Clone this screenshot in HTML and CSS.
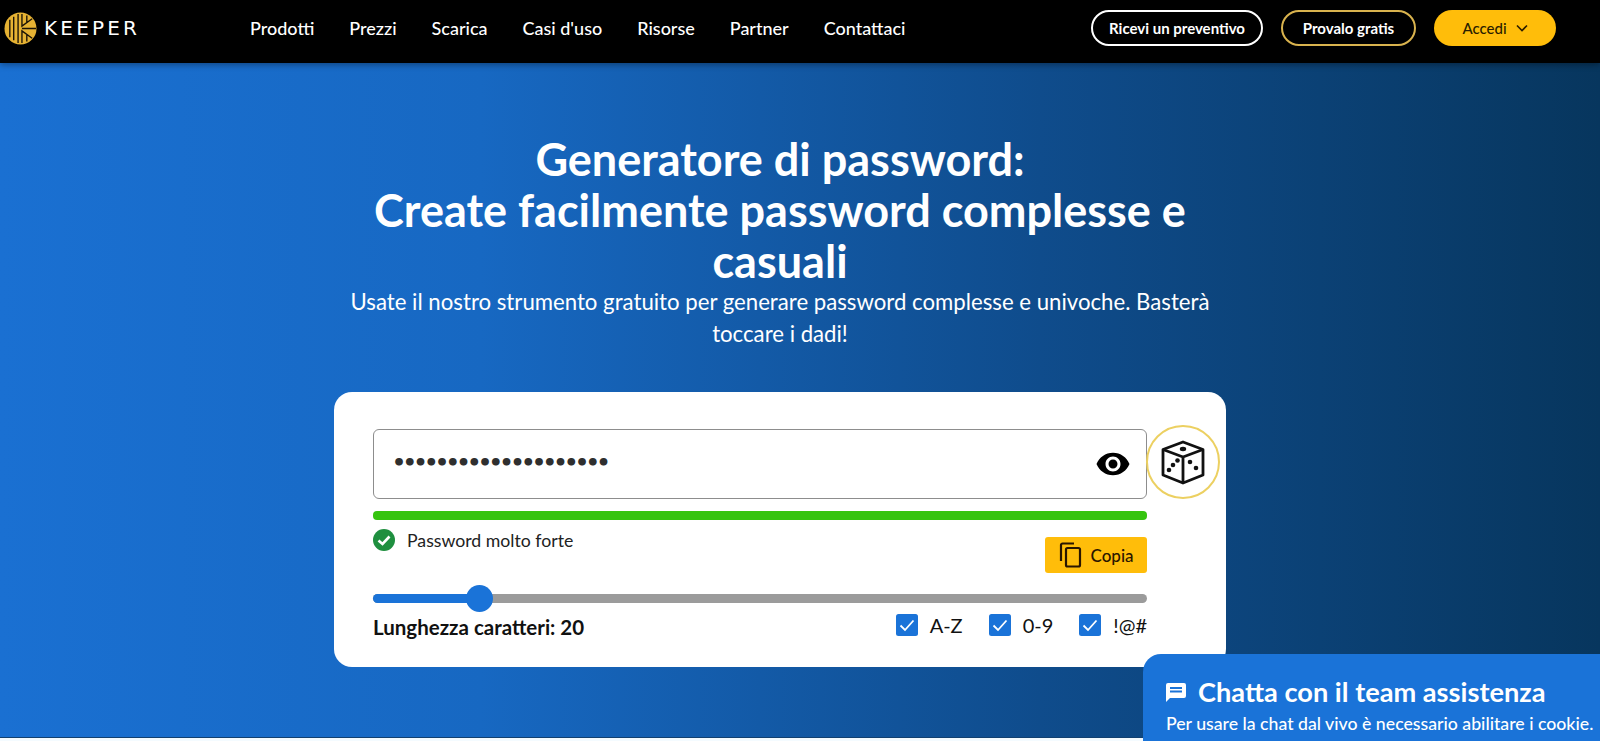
FILE: index.html
```html
<!DOCTYPE html>
<html lang="it">
<head>
<meta charset="utf-8">
<title>Generatore di password</title>
<link rel="stylesheet" href="styles.css">
</head>
<body>
<header class="topbar">
  <a class="logo">
    <svg class="logo-mark" viewBox="0 0 34 34" width="33" height="33" aria-hidden="true">
      <circle cx="17" cy="17" r="16.500" fill="#e6b233"/>
      <g fill="none" stroke="#1a1206" stroke-width="1.400">
        <path d="M6 8v18M10 5v24M14.500 2v30"/>
        <path d="M18.500 2v12.500L29 7M23.500 3.500v7M18.500 32V19.500L29 27M23.500 30.500v-7M18.500 17H33"/>
      </g>
    </svg>
    <span class="logo-text">KEEPER</span>
  </a>
  <nav class="nav">
    <a>Prodotti</a><a>Prezzi</a><a>Scarica</a><a>Casi d'uso</a><a>Risorse</a><a>Partner</a><a>Contattaci</a>
  </nav>
  <div class="actions">
    <a class="pill pill-white">Ricevi un preventivo</a>
    <a class="pill pill-gold">Provalo gratis</a>
    <a class="pill pill-solid">Accedi
      <svg viewBox="0 0 12 8" width="12" height="8" aria-hidden="true"><path d="M1 1.500l5 5 5-5" fill="none" stroke="#2a1c00" stroke-width="1.600"/></svg>
    </a>
  </div>
</header>
<main class="hero">
  <h1 class="title">Generatore di password:<br>Create facilmente password complesse e casuali</h1>
  <p class="lead">Usate il nostro strumento gratuito per generare password complesse e univoche. Basterà toccare i dadi!</p>
  <section class="card">
    <div class="field">
      <span class="dots">••••••••••••••••••••</span>
      <svg class="eye" viewBox="0 0 24 24" width="36" height="36" aria-hidden="true"><path fill="#000" d="M12 4.500C7 4.500 2.730 7.610 1 12c1.730 4.390 6 7.500 11 7.500s9.270-3.110 11-7.500c-1.730-4.390-6-7.500-11-7.500zM12 17c-2.760 0-5-2.240-5-5s2.240-5 5-5 5 2.240 5 5-2.240 5-5 5zm0-8c-1.660 0-3 1.340-3 3s1.340 3 3 3 3-1.340 3-3-1.340-3-3-3z"/></svg>
    </div>
    <button class="dice" type="button" aria-label="Dadi">
      <svg viewBox="0 0 48 48" width="48" height="48" aria-hidden="true">
        <g fill="none" stroke="#111" stroke-width="2.800" stroke-linejoin="round">
          <path d="M24 4L44 11.500V37L24 45L4 37V11.500Z"/>
          <path d="M4 11.500L24 19L44 11.500M24 19V45"/>
        </g>
        <g fill="#111">
          <ellipse cx="24" cy="11" rx="3.200" ry="2.200"/>
          <circle cx="10" cy="32" r="2.300"/><circle cx="14" cy="27" r="2.300"/><circle cx="18.500" cy="22.500" r="2.300"/>
          <circle cx="31" cy="24" r="2.300"/><circle cx="37" cy="30" r="2.300"/>
        </g>
      </svg>
    </button>
    <div class="bar"></div>
    <div class="status-row">
      <div class="status">
        <svg viewBox="0 0 22 22" width="22" height="22" aria-hidden="true"><circle cx="11" cy="11" r="11" fill="#1f8f3f"/><path d="M5.500 11.500l4 3.500 7-7.500" fill="none" stroke="#fff" stroke-width="2.600"/></svg>
        <span class="status-text">Password molto forte</span>
      </div>
      <button class="copy" type="button">
        <svg viewBox="0 0 24 26" width="24" height="26" aria-hidden="true"><path d="M3 19V3a1.500 1.500 0 0 1 1.500-1.500H16" fill="none" stroke="#2a1600" stroke-width="2.200"/><rect x="8" y="6" width="14" height="18.500" rx="1.500" fill="none" stroke="#2a1600" stroke-width="2.200"/></svg>
        Copia
      </button>
    </div>
    <div class="slider"><span class="slider-fill"></span><span class="slider-thumb"></span></div>
    <div class="options">
      <strong class="length">Lunghezza caratteri: 20</strong>
      <div class="checks">
        <label class="check"><svg viewBox="0 0 22 22" width="22" height="22" aria-hidden="true"><rect width="22" height="22" rx="2.500" fill="#1a73d8"/><path d="M4.500 11.500l4.500 4.500 8.500-9.500" fill="none" stroke="#fff" stroke-width="1.800"/></svg>A-Z</label>
        <label class="check"><svg viewBox="0 0 22 22" width="22" height="22" aria-hidden="true"><rect width="22" height="22" rx="2.500" fill="#1a73d8"/><path d="M4.500 11.500l4.500 4.500 8.500-9.500" fill="none" stroke="#fff" stroke-width="1.800"/></svg>0-9</label>
        <label class="check"><svg viewBox="0 0 22 22" width="22" height="22" aria-hidden="true"><rect width="22" height="22" rx="2.500" fill="#1a73d8"/><path d="M4.500 11.500l4.500 4.500 8.500-9.500" fill="none" stroke="#fff" stroke-width="1.800"/></svg>!@#</label>
      </div>
    </div>
  </section>
</main>
<aside class="chat">
  <div class="chat-title">
    <svg viewBox="0 0 24 24" width="24" height="24" aria-hidden="true"><path fill="#fff" d="M20 3H4a2 2 0 0 0-2 2v17l4-4h14a2 2 0 0 0 2-2V5a2 2 0 0 0-2-2zM6 7h12v2H6zm0 3.500h12v2H6zm0 3.500h8v-.100H6z"/></svg>
    <span>Chatta con il team assistenza</span>
  </div>
  <p class="chat-note">Per usare la chat dal vivo è necessario abilitare i cookie.</p>
</aside>
</body>
</html>
```
FILE: styles.css
```css
* { box-sizing: border-box; }
html, body { margin: 0; height: 100%; }
body {
  font-family: "Lato", "Noto Sans", sans-serif;
  overflow: hidden;
  background: #f4fbff;
  color: #111;
}
.topbar {
  position: relative;
  z-index: 2;
  height: 63px;
  background: #000;
  display: flex;
  align-items: center;
  padding: 0 44px 7px 4px;
  color: #fff;
  box-shadow: 0 2px 6px rgba(0,0,0,.35);
}
.logo { display: flex; align-items: center; gap: 7px; width: 246px; }
.logo-text { font-family: "DejaVu Sans", sans-serif; font-size: 20px; font-weight: 400; letter-spacing: 3.200px; }
.nav { display: flex; gap: 35px; font-size: 18px; font-weight: 500; }
.actions { margin-left: auto; display: flex; gap: 18px; align-items: center; }
.pill {
  height: 36px;
  border-radius: 18px;
  display: flex;
  align-items: center;
  justify-content: center;
  gap: 9px;
  font-size: 15px;
  font-weight: 700;
}
.pill-white { width: 172px; border: 2px solid #fff; }
.pill-gold { width: 135px; border: 2px solid #d9b34e; }
.pill-solid { width: 122px; background: #ffbd0a; color: #2a1c00; font-weight: 500; }
.hero {
  height: 675px;
  background: linear-gradient(90deg, #1a70d2 0%, #1768c2 30%, #0f4c8c 65%, #07365e 100%);
  border-bottom: 1px solid #12406f;
  display: flex;
  flex-direction: column;
  align-items: center;
  padding: 71px 40px 0 0;
  color: #fff;
  text-align: center;
}
.title { margin: 0; width: 900px; font-size: 45px; line-height: 51px; font-weight: 700; }
.lead { margin: -1px 0 0; width: 900px; font-size: 22.200px; line-height: 32px; }
.card {
  position: relative;
  margin-top: 42px;
  width: 892px;
  height: 275px;
  background: #fff;
  border-radius: 18px;
  padding: 37px 79px 0 39px;
  color: #111;
  text-align: left;
}
.field {
  height: 70px;
  border: 1px solid #8d8d8d;
  border-radius: 6px;
  display: flex;
  align-items: center;
  justify-content: space-between;
  padding: 0 15px 0 18px;
}
.dots { font-family: "DejaVu Sans", sans-serif; font-size: 22px; letter-spacing: -3.300px; color: #2f2f2f; font-weight: 700; margin-bottom: 4px; }
.dice {
  position: absolute;
  left: 812px;
  top: 33px;
  width: 74px;
  height: 74px;
  border-radius: 50%;
  border: 2.500px solid #ecd061;
  background: #fff;
  padding: 0;
  display: flex;
  align-items: center;
  justify-content: center;
}
.bar { height: 9px; margin-top: 12px; border-radius: 4px; background: #35c40f; }
.status-row { display: flex; justify-content: space-between; height: 65px; }
.status { display: flex; align-items: flex-start; gap: 12px; padding-top: 9px; font-size: 17.700px; color: #222; }
.status-text { margin-top: 1px; }
.copy {
  margin-top: 17px;
  width: 102px;
  height: 36px;
  border: 0;
  border-radius: 3px;
  background: #ffbd0a;
  color: #2a1600;
  font: 500 17px "Lato", sans-serif;
  display: flex;
  align-items: center;
  justify-content: center;
  gap: 8px;
}
.slider { position: relative; height: 9px; margin-top: 9px; border-radius: 5px; background: #9b9b9b; }
.slider-fill { display: block; width: 106px; height: 100%; border-radius: 5px; background: #1a73d8; }
.slider-thumb {
  position: absolute;
  left: 93px;
  top: -9px;
  width: 27px;
  height: 27px;
  border-radius: 50%;
  background: #1a73d8;
}
.options { display: flex; justify-content: space-between; align-items: center; margin-top: 8px; }
.length { font-size: 20.500px; font-weight: 700; margin-top: 4px; }
.checks { display: flex; gap: 26px; }
.check { display: flex; align-items: center; gap: 12px; font-size: 20px; }
.chat {
  position: fixed;
  right: 0;
  bottom: 0;
  z-index: 3;
  width: 457px;
  height: 87px;
  background: #1a73d8;
  border-radius: 18px 0 0 0;
  color: #fff;
  padding: 21px 0 0 21px;
}
.chat-title { display: flex; align-items: center; gap: 10px; font-size: 27.200px; font-weight: 700; }
.chat-note { margin: 5px 0 0 2px; font-size: 17.700px; font-weight: 500; white-space: nowrap; }
```
